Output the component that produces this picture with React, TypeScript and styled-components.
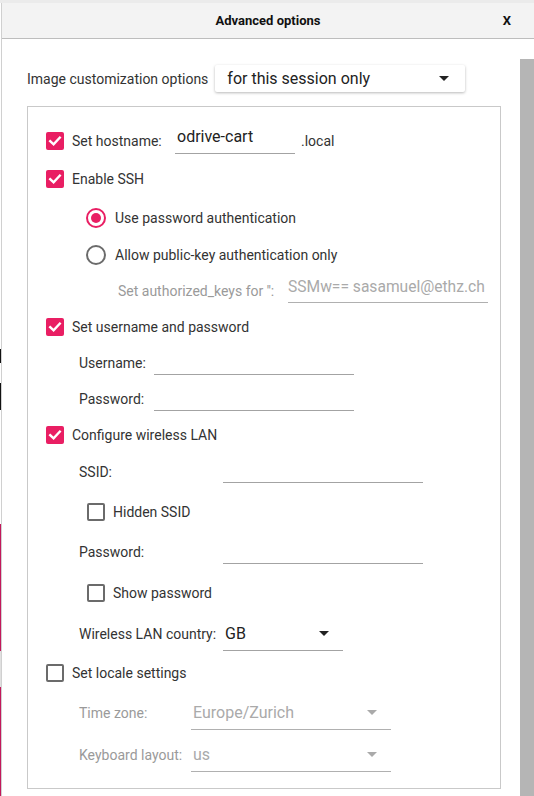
import React from "react";
import styled, { createGlobalStyle } from "styled-components";

const GlobalStyle = createGlobalStyle`
  html, body {
    margin: 0;
    padding: 0;
    background: #ffffff;
  }
  body {
    font-family: Roboto, "Liberation Sans", sans-serif;
    color: #333;
    overflow: hidden;
  }
`;

const PINK = "#e91e63";

const Page = styled.div`
  display: flex;
  flex-direction: column;
  height: 796px;
  width: 534px;
  overflow: hidden;
`;

const TopBand = styled.div`
  height: 3px;
  background: #ebebeb;
`;

const Frame = styled.div`
  display: flex;
  flex: 1;
  min-height: 0;
`;

// the app behind the dialog shows through at the very left pixel
const Backdrop = styled.div`
  width: 1px;
  background: linear-gradient(
    to bottom,
    #ffffff 0px,
    #ffffff 346px,
    #111 346px,
    #111 360px,
    #ffffff 360px,
    #ffffff 380px,
    #111 380px,
    #111 407px,
    #ffffff 407px,
    #ffffff 521px,
    #c2185b 521px,
    #c2185b 648px,
    #e0e0e0 648px,
    #e0e0e0 684px,
    #c2185b 684px
  );
`;

const Dialog = styled.div`
  flex: 1;
  display: flex;
  flex-direction: column;
  border-left: 1px solid #d0d0d0;
  background: #fff;
`;

const Header = styled.div`
  height: 35px;
  border-bottom: 1px solid #bdbdbd;
  background: #f3f3f3;
  display: grid;
  grid-template-columns: 1fr auto 1fr;
  align-items: center;
  font-size: 13px;
  font-weight: 700;
  color: #111;
`;

const Title = styled.div`
  grid-column: 2;
`;

const Close = styled.div`
  grid-column: 3;
  justify-self: end;
  margin-right: 23px;
  cursor: pointer;
`;

const Body = styled.div`
  flex: 1;
  display: flex;
  min-height: 0;
`;

const Content = styled.div`
  flex: 1;
  padding: 26px 19px 0 25px;
  display: flex;
  flex-direction: column;
  gap: 14px;
`;

const Scrollbar = styled.div`
  width: 14px;
  margin-top: 20px;
  background: #b5b5b5;
`;

const TopRow = styled.div`
  display: flex;
  align-items: center;
  height: 27px;
  gap: 7px;
  font-size: 14px;
`;

const Combo = styled.div`
  width: 250px;
  height: 27px;
  box-sizing: border-box;
  display: flex;
  align-items: center;
  justify-content: space-between;
  padding: 0 16px 0 12px;
  background: #fff;
  border-radius: 2px;
  box-shadow: 0 1px 3px rgba(0, 0, 0, 0.28);
  font-size: 16px;
  color: #222;
`;

const Arrow = styled.span<{ $muted?: boolean }>`
  width: 0;
  height: 0;
  border-left: 5px solid transparent;
  border-right: 5px solid transparent;
  border-top: 5px solid ${(p) => (p.$muted ? "#aaa" : "#222")};
`;

const Group = styled.div`
  width: 474px;
  box-sizing: border-box;
  border: 1px solid #c9c9c9;
  padding: 15px 0 12px 0;
  display: flex;
  flex-direction: column;
`;

const Row = styled.div<{ $h: number; $indent: number }>`
  display: flex;
  align-items: center;
  height: ${(p) => p.$h}px;
  padding-left: ${(p) => p.$indent}px;
  font-size: 14px;
`;

const Check = styled.span<{ $on?: boolean }>`
  width: 18px;
  height: 18px;
  box-sizing: border-box;
  border-radius: 2px;
  margin-right: 8px;
  flex-shrink: 0;
  display: flex;
  align-items: center;
  justify-content: center;
  background: ${(p) => (p.$on ? PINK : "#fff")};
  border: ${(p) => (p.$on ? "none" : "2px solid #6b6b6b")};
`;

const Radio = styled.span<{ $on?: boolean }>`
  width: 20px;
  height: 20px;
  box-sizing: border-box;
  border-radius: 50%;
  margin-right: 9px;
  flex-shrink: 0;
  display: flex;
  align-items: center;
  justify-content: center;
  border: 2px solid ${(p) => (p.$on ? PINK : "#6b6b6b")};

  &::after {
    content: "";
    width: 10px;
    height: 10px;
    border-radius: 50%;
    background: ${(p) => (p.$on ? PINK : "transparent")};
  }
`;

const Label = styled.span<{ $w?: number; $muted?: boolean }>`
  ${(p) => (p.$w ? `width: ${p.$w}px; flex-shrink: 0;` : "")}
  font-size: 14px;
  color: ${(p) => (p.$muted ? "#9a9a9a" : "#333")};
  white-space: nowrap;
`;

const Field = styled.div<{
  $w: number;
  $h: number;
  $pb?: number;
  $pl?: number;
  $fs?: number;
  $muted?: boolean;
}>`
  width: ${(p) => p.$w}px;
  height: ${(p) => p.$h}px;
  box-sizing: border-box;
  flex-shrink: 0;
  border-bottom: 1px solid ${(p) => (p.$muted ? "#b0b0b0" : "#a3a3a3")};
  display: flex;
  align-items: flex-end;
  justify-content: space-between;
  padding: 0 0 ${(p) => p.$pb || 0}px ${(p) => (p.$pl ?? 2)}px;
  font-size: ${(p) => p.$fs || 16}px;
  line-height: 18px;
  color: ${(p) => (p.$muted ? "#aaa" : "#222")};
  white-space: nowrap;
`;

const FieldArrow = styled.span`
  display: flex;
  align-items: center;
  height: 18px;
  margin-right: 14px;
`;

const Suffix = styled.span`
  margin-left: 6px;
  font-size: 14px;
`;

const Tick = () => (
  <svg width="14" height="14" viewBox="0 0 14 14">
    <path
      d="M2.2 7.2 L5.6 10.4 L11.8 3.6"
      fill="none"
      stroke="#fff"
      strokeWidth="2.4"
      strokeLinecap="square"
    />
  </svg>
);

const Box = ({ on }: { on?: boolean }) => (
  <Check $on={on}>{on && <Tick />}</Check>
);

export default function App() {
  return (
    <Page>
      <GlobalStyle />
      <TopBand />
      <Frame>
        <Backdrop />
        <Dialog>
          <Header>
            <Title>Advanced options</Title>
            <Close>X</Close>
          </Header>
          <Body>
            <Content>
              <TopRow>
                <span>Image customization options</span>
                <Combo>
                  for this session only
                  <Arrow />
                </Combo>
              </TopRow>

              <Group>
                <Row $h={38} $indent={18}>
                  <Box on />
                  <Label $w={103}>Set hostname:</Label>
                  <Field $w={120} $h={26} $pb={7}>
                    odrive-cart
                  </Field>
                  <Suffix>.local</Suffix>
                </Row>
                <Row $h={38} $indent={18}>
                  <Box on />
                  <Label>Enable SSH</Label>
                </Row>
                <Row $h={39} $indent={58}>
                  <Radio $on />
                  <Label>Use password authentication</Label>
                </Row>
                <Row $h={36} $indent={58}>
                  <Radio />
                  <Label>Allow public-key authentication only</Label>
                </Row>
                <Row $h={36} $indent={90}>
                  <Label $w={170} $muted>
                    Set authorized_keys for '':
                  </Label>
                  <Field $w={200} $h={24} $pb={6} $pl={0} $fs={15.6} $muted>
                    SSMw== sasamuel@ethz.ch
                  </Field>
                </Row>
                <Row $h={35} $indent={18}>
                  <Box on />
                  <Label>Set username and password</Label>
                </Row>
                <Row $h={37} $indent={51}>
                  <Label $w={75}>Username:</Label>
                  <Field $w={200} $h={24} />
                </Row>
                <Row $h={36} $indent={51}>
                  <Label $w={75}>Password:</Label>
                  <Field $w={200} $h={24} />
                </Row>
                <Row $h={36} $indent={18}>
                  <Box on />
                  <Label>Configure wireless LAN</Label>
                </Row>
                <Row $h={38} $indent={51}>
                  <Label $w={144}>SSID:</Label>
                  <Field $w={200} $h={22} />
                </Row>
                <Row $h={41} $indent={59}>
                  <Box />
                  <Label>Hidden SSID</Label>
                </Row>
                <Row $h={40} $indent={51}>
                  <Label $w={144}>Password:</Label>
                  <Field $w={200} $h={24} />
                </Row>
                <Row $h={41} $indent={59}>
                  <Box />
                  <Label>Show password</Label>
                </Row>
                <Row $h={41} $indent={51}>
                  <Label $w={144}>Wireless LAN country:</Label>
                  <Field $w={120} $h={34} $pb={7}>
                    GB
                    <FieldArrow>
                      <Arrow />
                    </FieldArrow>
                  </Field>
                </Row>
                <Row $h={38} $indent={18}>
                  <Box />
                  <Label>Set locale settings</Label>
                </Row>
                <Row $h={41} $indent={51}>
                  <Label $w={112} $muted>
                    Time zone:
                  </Label>
                  <Field $w={200} $h={34} $pb={7} $muted>
                    Europe/Zurich
                    <FieldArrow>
                      <Arrow $muted />
                    </FieldArrow>
                  </Field>
                </Row>
                <Row $h={43} $indent={51}>
                  <Label $w={112} $muted>
                    Keyboard layout:
                  </Label>
                  <Field $w={200} $h={34} $pb={7} $muted>
                    us
                    <FieldArrow>
                      <Arrow $muted />
                    </FieldArrow>
                  </Field>
                </Row>
              </Group>
            </Content>
            <Scrollbar />
          </Body>
        </Dialog>
      </Frame>
    </Page>
  );
}
